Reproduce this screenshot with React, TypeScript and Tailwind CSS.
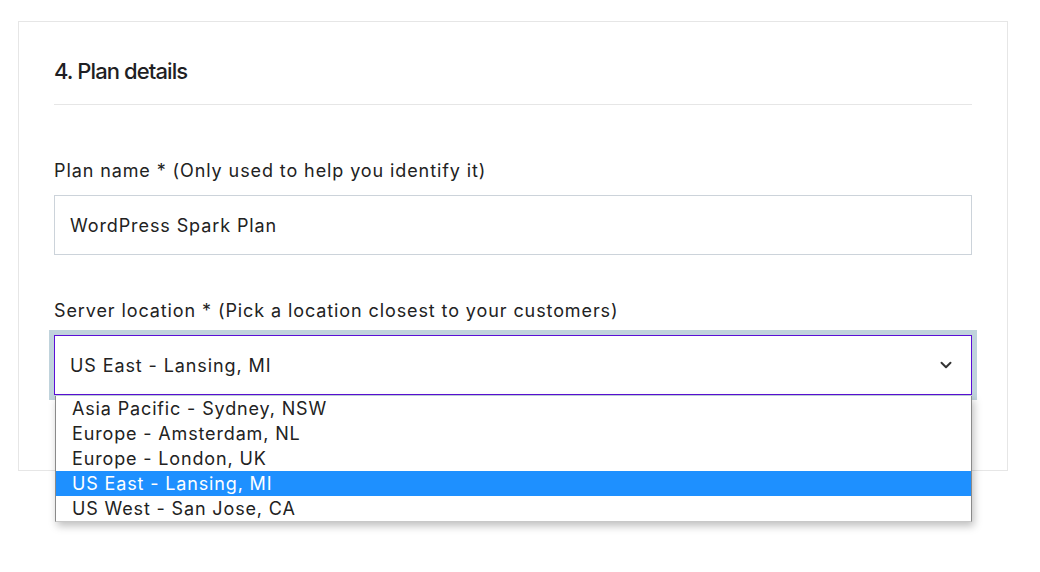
const locations = [
  'Asia Pacific - Sydney, NSW',
  'Europe - Amsterdam, NL',
  'Europe - London, UK',
  'US East - Lansing, MI',
  'US West - San Jose, CA',
];

function ChevronDown() {
  return (
    <svg width="18" height="18" viewBox="0 0 24 24" fill="none" stroke="#333" strokeWidth="2.6" strokeLinecap="round" strokeLinejoin="round">
      <path d="m6 9 6 6 6-6" />
    </svg>
  );
}

export default function App() {
  const selected = 'US East - Lansing, MI';
  return (
    <div className="min-h-[572px] bg-white pl-[18px] pr-[32px] pt-[21px] text-[#1d1d1f]" style={{ fontFamily: 'Inter, "Noto Sans", sans-serif' }}>
      <div className="border border-[#e6e6e6] bg-white px-[35px] pt-[34px] pb-[75px]">
        <h2 className="border-b border-[#e6e6e6] pb-[18px] text-[22px] leading-[30px] font-medium tracking-[-0.9px] text-[#1f1f24]">4. Plan details</h2>

        <label className="mt-[52px] block text-[18px] leading-[28px] tracking-[0.9px] text-[#222]">Plan name * (Only used to help you identify it)</label>
        <div className="mt-[10px] flex h-[60px] items-center border border-[#ccd3da] px-[15px] text-[18px] tracking-[0.9px] text-[#222]">
          WordPress Spark Plan
        </div>

        <label className="mt-[42px] block text-[18px] leading-[28px] tracking-[0.9px] text-[#222]">Server location * (Pick a location closest to your customers)</label>
        <div className="relative mt-[10px]">
          <div className="flex h-[60px] items-center justify-between border border-[#5b0fd6] px-[15px] pr-[16px] text-[18px] tracking-[0.9px] text-[#222] shadow-[0_0_0_5px_#c0d3dc]">
            <span>{selected}</span>
            <ChevronDown />
          </div>
          <ul className="absolute left-[1px] right-0 top-[61px] z-10 border-x border-b border-x-[#8a8a8a] border-b-[#c8c8c8] bg-white py-0 shadow-[2px_4px_8px_rgba(0,0,0,0.25)]">
            {locations.map((loc) => (
              <li
                key={loc}
                className={
                  loc === selected
                    ? 'h-[25px] bg-[#1e90ff] pl-[16px] text-[18px] leading-[25px] tracking-[0.85px] text-white'
                    : 'h-[25px] pl-[16px] text-[18px] leading-[25px] tracking-[0.85px] text-[#222]'
                }
              >
                {loc}
              </li>
            ))}
          </ul>
        </div>
      </div>
    </div>
  );
}
